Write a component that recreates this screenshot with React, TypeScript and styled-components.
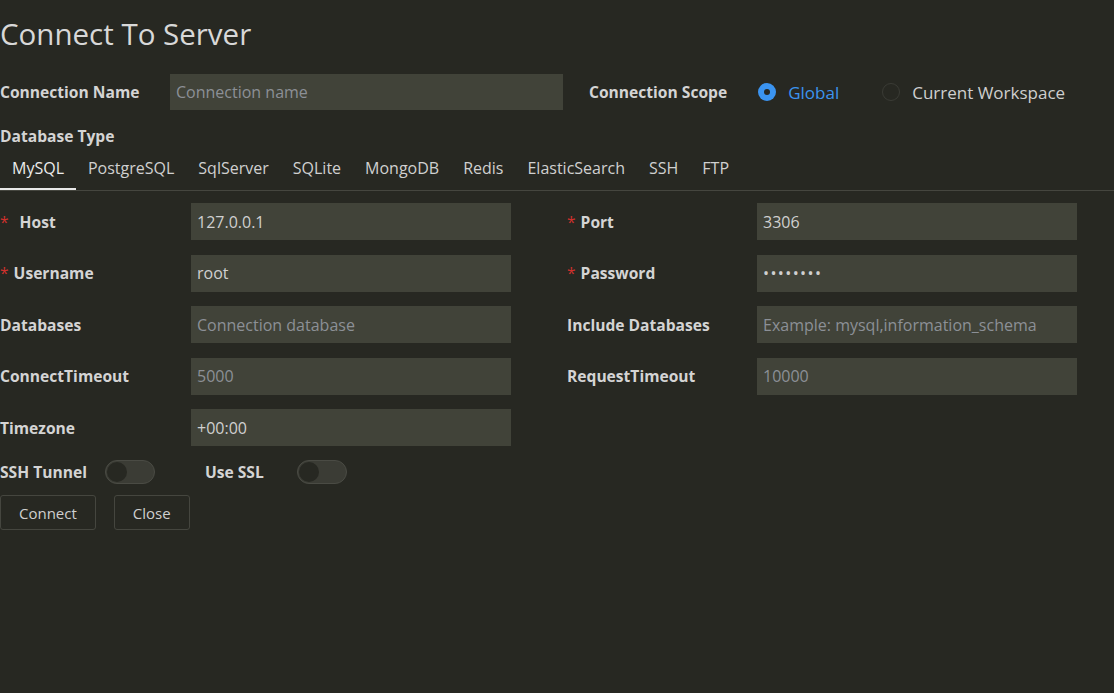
import React from "react";
import styled, { createGlobalStyle } from "styled-components";

const Global = createGlobalStyle`
  html, body { margin: 0; padding: 0; background: #272822; }
  body { font-family: "Open Sans", "Noto Sans", sans-serif; color: #d6d6d6; }
  * { box-sizing: border-box; }
`;

const Page = styled.div`
  width: 1114px;
  height: 693px;
  background: #272822;
  display: flex;
  flex-direction: column;
`;

const Title = styled.h1`
  margin: 14px 0 0 0;
  font-size: 29.5px;
  font-weight: 400;
  line-height: 40px;
  color: #d8d8d8;
`;

const TopRow = styled.div`
  display: flex;
  align-items: center;
  height: 36px;
  margin-top: 20px;
`;

const Label = styled.label<{ $w?: number }>`
  font-size: 15.6px;
  font-weight: 700;
  color: #d4d4d4;
  width: ${(p) => (p.$w ? `${p.$w}px` : "auto")};
  flex-shrink: 0;
  white-space: nowrap;
  display: flex;
  align-items: center;
`;

const Input = styled.input<{ $w: number; $h?: number; $dots?: boolean }>`
  width: ${(p) => p.$w}px;
  height: ${(p) => p.$h ?? 37}px;
  background: #414339;
  border: none;
  outline: none;
  padding: 0 6px;
  font-family: inherit;
  font-size: 16px;
  color: #d0d0d0;
  letter-spacing: ${(p) => (p.$dots ? "1.4px" : "0")};
  &::placeholder { color: #8c9096; letter-spacing: 0; }
`;

const ScopeLabel = styled(Label)`
  margin-left: 26px;
  margin-right: 31px;
`;

const RadioItem = styled.div<{ $on?: boolean }>`
  display: flex;
  align-items: center;
  gap: 12px;
  margin-right: 43px;
  font-size: 17px;
  color: ${(p) => (p.$on ? "#3b94f0" : "#cfcfcf")};
`;

const RadioDot = styled.span<{ $on?: boolean }>`
  width: 18px;
  height: 18px;
  border-radius: 50%;
  position: relative;
  background: ${(p) => (p.$on ? "#3b94f0" : "transparent")};
  border: ${(p) => (p.$on ? "none" : "1px solid #3a3b35")};
  &::after {
    content: "";
    display: ${(p) => (p.$on ? "block" : "none")};
    position: absolute;
    left: 6px;
    top: 6px;
    width: 6px;
    height: 6px;
    border-radius: 50%;
    background: #272822;
  }
`;

const SectionLabel = styled(Label)`
  margin-top: 16px;
  line-height: 20px;
`;

const Tabs = styled.div`
  display: flex;
  margin-top: 10px;
  border-bottom: 1px solid #45463f;
`;

const Tab = styled.div<{ $active?: boolean }>`
  padding: 0 12px 10px;
  height: 34px;
  display: flex;
  align-items: center;
  font-size: 16px;
  color: ${(p) => (p.$active ? "#ececec" : "#d0d0d0")};
  box-shadow: ${(p) => (p.$active ? "inset 0 -2px 0 #e8e8e8" : "none")};
`;

const Grid = styled.div`
  display: grid;
  grid-template-columns: 191px 320px 56px 190px 320px;
  row-gap: 14.5px;
  margin-top: 12px;
  align-items: center;
`;

const Req = styled.span<{ $gap?: number }>`
  color: #d0312d;
  font-weight: 400;
  margin-right: ${(p) => p.$gap ?? 5}px;
`;

const Spacer = styled.div``;

const ToggleRow = styled.div`
  display: flex;
  align-items: center;
  margin-top: 13px;
  height: 26px;
`;

const Switch = styled.span<{ $ml?: number; $mr?: number }>`
  width: 50px;
  height: 24px;
  border-radius: 12px;
  background: #3b3c35;
  border: 1px solid #4a4b44;
  position: relative;
  margin-left: ${(p) => p.$ml ?? 18}px;
  margin-right: ${(p) => p.$mr ?? 0}px;
  &::after {
    content: "";
    position: absolute;
    left: 1px;
    top: 1px;
    width: 20px;
    height: 20px;
    border-radius: 50%;
    background: #272822;
  }
`;

const Buttons = styled.div`
  display: flex;
  gap: 18px;
  margin-top: 10px;
`;

const Button = styled.button`
  height: 35px;
  padding: 0 18px;
  background: transparent;
  border: 1px solid #45463f;
  border-radius: 3px;
  font-family: inherit;
  font-size: 15px;
  color: #cfcfcf;
`;

const tabs = ["MySQL", "PostgreSQL", "SqlServer", "SQLite", "MongoDB", "Redis", "ElasticSearch", "SSH", "FTP"];

export default function App() {
  return (
    <Page>
      <Global />
      <Title>Connect To Server</Title>
      <TopRow>
        <Label $w={170}>Connection Name</Label>
        <Input $w={393} $h={36} placeholder="Connection name" />
        <ScopeLabel>Connection Scope</ScopeLabel>
        <RadioItem $on>
          <RadioDot $on />
          Global
        </RadioItem>
        <RadioItem>
          <RadioDot />
          Current Workspace
        </RadioItem>
      </TopRow>
      <SectionLabel>Database Type</SectionLabel>
      <Tabs>
        {tabs.map((t, i) => (
          <Tab key={t} $active={i === 0}>{t}</Tab>
        ))}
      </Tabs>
      <Grid>
        <Label><Req $gap={11}>*</Req>Host</Label>
        <Input $w={320} defaultValue="127.0.0.1" />
        <Spacer />
        <Label><Req>*</Req>Port</Label>
        <Input $w={320} defaultValue="3306" />

        <Label><Req>*</Req>Username</Label>
        <Input $w={320} defaultValue="root" />
        <Spacer />
        <Label><Req>*</Req>Password</Label>
        <Input $w={320} $dots type="password" defaultValue="12345678" />

        <Label>Databases</Label>
        <Input $w={320} placeholder="Connection database" />
        <Spacer />
        <Label>Include Databases</Label>
        <Input $w={320} placeholder="Example: mysql,information_schema" />

        <Label>ConnectTimeout</Label>
        <Input $w={320} placeholder="5000" />
        <Spacer />
        <Label>RequestTimeout</Label>
        <Input $w={320} placeholder="10000" />

        <Label>Timezone</Label>
        <Input $w={320} defaultValue="+00:00" />
      </Grid>
      <ToggleRow>
        <Label>SSH Tunnel</Label>
        <Switch $mr={50} />
        <Label>Use SSL</Label>
        <Switch $ml={33} />
      </ToggleRow>
      <Buttons>
        <Button>Connect</Button>
        <Button>Close</Button>
      </Buttons>
    </Page>
  );
}
